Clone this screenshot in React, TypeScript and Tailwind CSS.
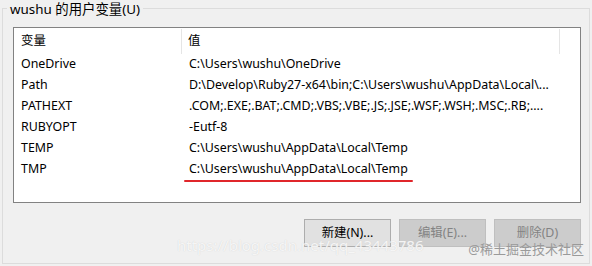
const rows = [
  { name: "OneDrive", value: "C:\\Users\\wushu\\OneDrive" },
  { name: "Path", value: "D:\\Develop\\Ruby27-x64\\bin;C:\\Users\\wushu\\AppData\\Local\\..." },
  { name: "PATHEXT", value: ".COM;.EXE;.BAT;.CMD;.VBS;.VBE;.JS;.JSE;.WSF;.WSH;.MSC;.RB;...." },
  { name: "RUBYOPT", value: "-Eutf-8" },
  { name: "TEMP", value: "C:\\Users\\wushu\\AppData\\Local\\Temp" },
  { name: "TMP", value: "C:\\Users\\wushu\\AppData\\Local\\Temp", marked: true },
];

const font = { fontFamily: '"Noto Sans", "Noto Sans CJK SC", sans-serif' };

export default function App() {
  return (
    <div className="w-[592px] h-[266px] bg-[#f0f0f0] overflow-hidden text-[12.4px] text-black" style={font}>
      <div className="relative ml-[2px] mt-[8px] w-[588px] h-[256px] border border-[#dcdcdc] pl-[10px] pt-[18px]">
        <div className="absolute left-[4px] top-[-9px] bg-[#f0f0f0] px-[3px] leading-[18px] text-[13.4px]">wushu 的用户变量(U)</div>

        <div className="w-[568px] h-[176px] border border-[#828282] bg-white pt-[1px]">
          <div className="flex h-[25px] items-center">
            <div className="w-[168px] h-full flex items-center pl-[7px] border-r border-[#e5e5e5]">变量</div>
            <div className="w-[378px] h-full flex items-center pl-[6px] border-r border-[#e5e5e5]">值</div>
          </div>
          {rows.map((r) => (
            <div key={r.name} className="flex h-[21px] items-center">
              <div className="w-[169px] pl-[7px] whitespace-nowrap">{r.name}</div>
              <div className="relative pl-[6px] whitespace-nowrap">
                {r.value}
                {r.marked && (
                  <div className="absolute left-[1px] right-[-5px] bottom-[-3px] h-[2px] bg-[#e0262b] rounded-full" />
                )}
              </div>
            </div>
          ))}
        </div>

        <div className="relative w-[568px] mt-[16px] flex justify-end gap-[8px]">
          <button className="w-[87px] h-[28px] border border-[#adadad] bg-[#e1e1e1] text-black">新建(N)...</button>
          <button className="w-[87px] h-[28px] border border-[#bfbfbf] bg-[#cccccc] text-[#838383]">编辑(E)...</button>
          <button className="w-[87px] h-[28px] border border-[#bfbfbf] bg-[#cccccc] text-[#838383]">删除(D)</button>
          <div className="absolute left-[164px] top-[15px] text-[15px] text-white/80 whitespace-nowrap" style={{ textShadow: "0 0 1px #c8c8c8" }}>
            https://blog.csdn.net/qq_43443786
          </div>
          <div className="absolute right-[-3px] top-[21px] text-[13px] text-[#9a9a9a] whitespace-nowrap">@稀土掘金技术社区</div>
        </div>
      </div>
    </div>
  );
}
